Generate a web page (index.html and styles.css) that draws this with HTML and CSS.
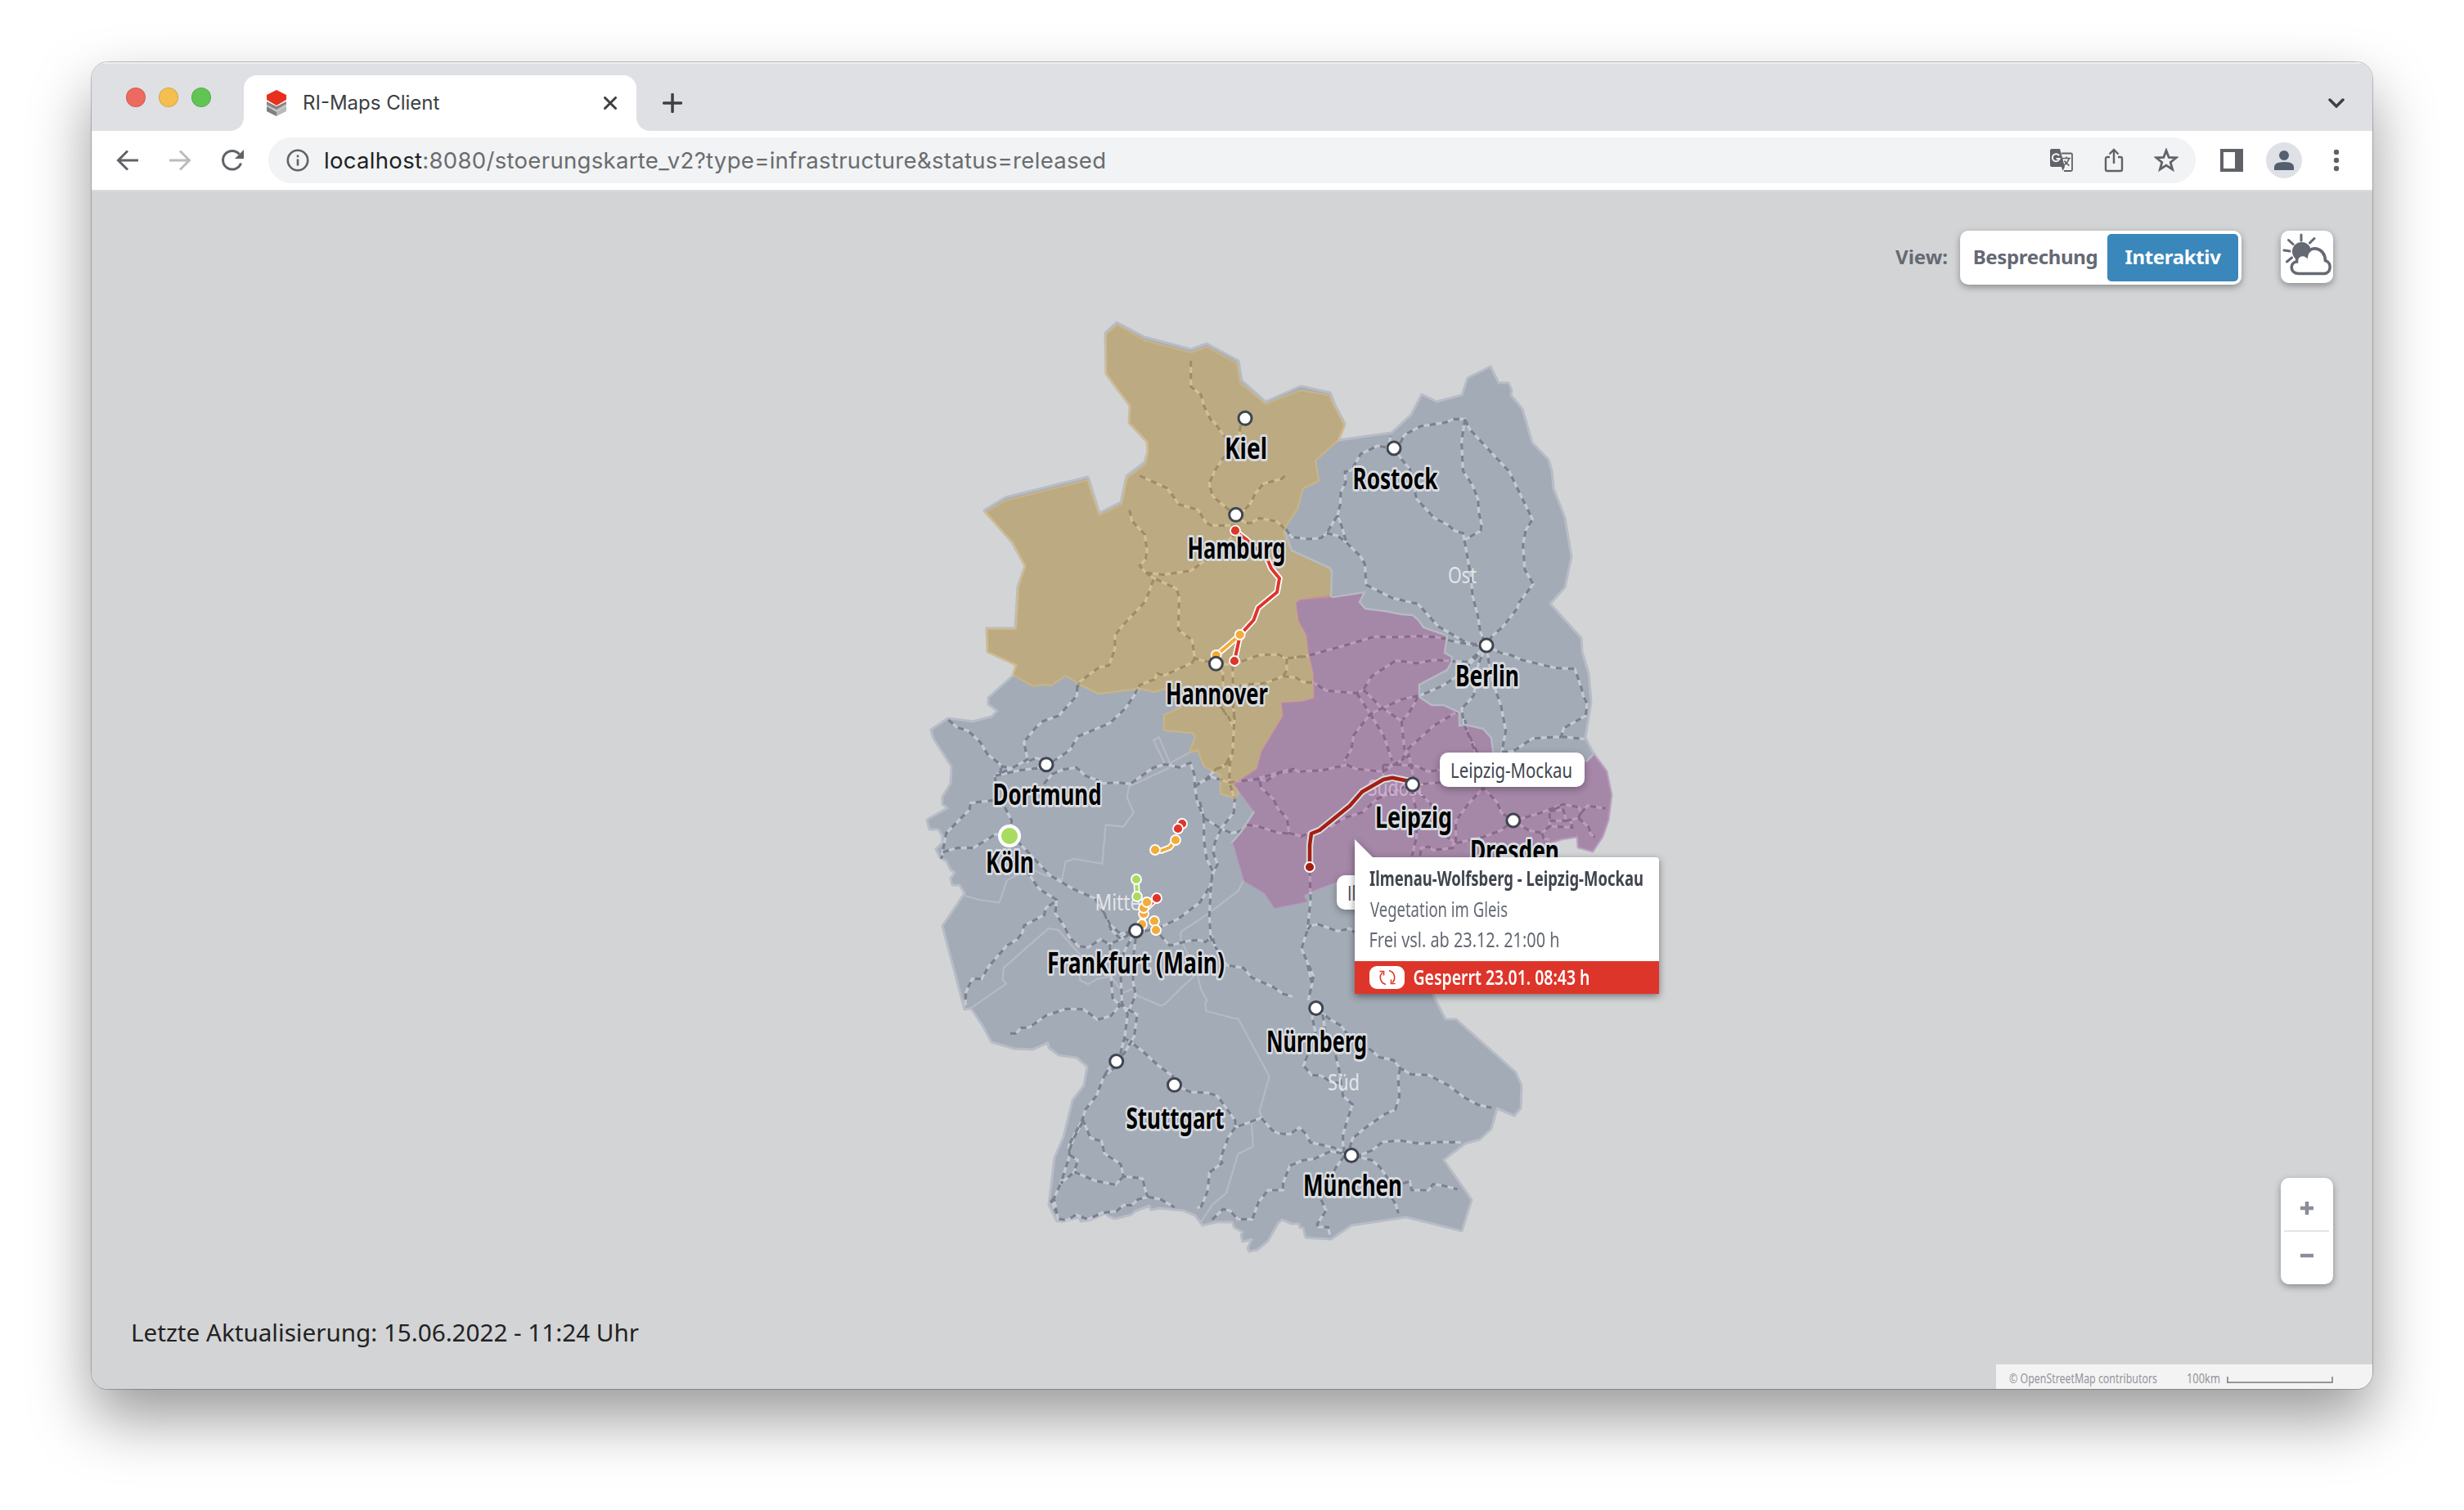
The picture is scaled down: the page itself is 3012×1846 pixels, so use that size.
FILE: index.html
```html
<!DOCTYPE html>
<html lang="de">
<head>
<meta charset="utf-8">
<title>RI-Maps Client</title>
<link rel="stylesheet" href="styles.css">
</head>
<body>
<div class="window">
  <header class="tabstrip">
    <div class="lights"><i class="light red"></i><i class="light yellow"></i><i class="light green"></i></div>
    <div class="tab">
      <svg class="favicon" width="24" height="32" viewBox="0 0 24 32">
        <path fill="#b9b9b9" d="M0 20 12 26 24 20V26L12 32 0 26Z"/>
        <path fill="#808080" d="M0 20 12 27V32L0 26Z"/>
        <path fill="#c4c4c4" d="M0 15 12 21 24 15V20L12 26 0 20Z"/>
        <path fill="#858585" d="M0 14 12 20 24 14V17L12 24 0 18Z"/>
        <path fill="#e8301f" d="M12 0 24 6V12L12 19 0 12V6Z"/>
      </svg>
      <span class="tab-title">RI-Maps Client</span>
      <svg class="close" width="16" height="16" viewBox="0 0 16 16"><path d="M1.5 1.5 14.5 14.5M14.5 1.5 1.5 14.5"/></svg>
    </div>
    <svg class="plus" width="24" height="24" viewBox="0 0 24 24"><path d="M12 1.5V22.500M1.5 12H22.500"/></svg>
    <svg class="chevron" width="20" height="12" viewBox="0 0 20 12"><path d="M2 2 10 10 18 2"/></svg>
  </header>

  <div class="toolbar">
    <svg class="nav" width="28" height="28" viewBox="0 0 28 28"><path d="M27 14H3M14 2.500 2.500 14 14 25.500"/></svg>
    <svg class="nav off" width="28" height="28" viewBox="0 0 28 28"><path d="M1 14H25M14 2.500 25.500 14 14 25.500"/></svg>
    <svg class="nav" width="28" height="28" viewBox="0 0 28 28"><path d="M24.500 17.500A11.300 11.300 0 1 1 22.500 6.500"/><path class="solid" d="M28 1V12H17Z"/></svg>
    <div class="omnibox">
      <svg class="info" width="28" height="28" viewBox="0 0 28 28"><circle cx="14" cy="14" r="12.200"/><path d="M14 12.500V20.500M14 7.500V10.200"/></svg>
      <span class="url"><b>localhost</b>:8080/stoerungskarte_v2?type=infrastructure&amp;status=released</span>
      <svg class="ico" width="28" height="28" viewBox="0 0 28 28">
        <path d="M14 5.500H25.500Q27 5.500 27 7V25.500Q27 27 25.500 27H17" fill="none" stroke="#5f6368" stroke-width="1.800"/>
        <path d="M15 11.500H25M20 9.500V11.500M23 12Q21.500 17.500 16 20.500M17.500 14.500Q19.500 18 23.500 20.500" fill="none" stroke="#5f6368" stroke-width="1.600"/>
        <path d="M2 0H12L18 22 15.500 27 14 22H2Q0 22 0 20V2Q0 0 2 0Z" fill="#5f6368"/>
        <path d="M11.200 8.300A4.500 4.500 0 1 0 11.700 12H7.500" fill="none" stroke="#f1f3f4" stroke-width="2"/>
      </svg>
      <svg class="ico share" width="24" height="30" viewBox="0 0 24 30"><path d="M7 11H4Q2 11 2 13V26Q2 28 4 28H20Q22 28 22 26V13Q22 11 20 11H17M12 19V3M6.500 7.500 12 2 17.500 7.500" fill="none" stroke="#5f6368" stroke-width="2.400"/></svg>
      <svg class="ico star" width="30" height="30" viewBox="0 0 30 30"><path d="M15 3 18.200 11.400 27.200 11.800 20.200 17.400 22.600 26 15 21.100 7.400 26 9.800 17.400 2.800 11.800 11.800 11.400Z" fill="none" stroke="#5f6368" stroke-width="2.800"/></svg>
    </div>
    <svg class="panel" width="28" height="28" viewBox="0 0 28 28"><path fill="#5f6368" fill-rule="evenodd" d="M0 0H28V28H0ZM4 4V24H18V4Z"/></svg>
    <svg class="avatar" width="44" height="44" viewBox="0 0 44 44"><circle cx="22" cy="22" r="22" fill="#dee1e6"/><circle cx="22" cy="16" r="6" fill="#565f70"/><path d="M10 34V30Q10 24 22 24T34 30V34Z" fill="#565f70"/></svg>
    <svg class="dots" width="8" height="28" viewBox="0 0 8 28"><circle cx="4" cy="4" r="3.200"/><circle cx="4" cy="14" r="3.200"/><circle cx="4" cy="24" r="3.200"/></svg>
  </div>

  <main class="stage">
    <svg class="map" viewBox="112 232 2788 1466">
      <defs>
        <g id="rails">
          <g transform="translate(1120 380) scale(.357143 .333333)">
            <path d="M940 183 940 278 975 308 985 350 1008 400 1020 408 1060 468 1095 500M1110 420 1100 500 1050 540 1020 590 1003 635 1015 680 1070 730 1092 750M765 605 858 650 900 710 965 730 990 775 1010 787 1092 787M1262 605 1250 617 1190 633 1160 670 1145 705 1120 735 1094 748M1094 755 1130 778 1145 778 1175 760 1235 773 1262 800M730 730 738 770 782 820 790 880 785 910 765 935 785 960 845 968 940 953 990 915 1085 825 1092 790M785 960 812 980 890 1018 900 1050 897 1170 945 1208 953 1275 1020 1293M812 985 785 1065 710 1150 680 1190 680 1240 660 1300 625 1308 560 1360 550 1385M953 1275 945 1290 850 1337 825 1330 815 1352 765 1372 755 1400M1030 1298 1090 1295 1175 1262 1240 1260 1262 1275 1330 1268 1365 1258M1268 1275 1268 1320 1255 1340 1195 1365 1120 1372 1050 1400M1255 1340 1300 1345 1325 1362 1358 1362M1030 1298 1050 1330 1050 1375 1040 1450 1075 1500M1083 1300 1085 1450 1090 1500"/>
          </g>
          <g transform="translate(1540 430) scale(.333333)">
            <path d="M95 650 117 680 180 687 225 683 245 665 285 600 295 560 297 515 315 480 312 440 335 435 370 375 432 345 470 352M490 352 475 335 480 310M245 665 285 675 318 700 300 640 285 600M318 700 370 752 385 778 390 855 485 903 580 925 655 1008 760 1068 830 1078M690 1058 740 1068 800 1078M515 335 530 305 590 273 680 260 710 247 752 247 770 285 915 440 1000 615 975 655 965 710 972 800 1003 852 950 920 945 940 890 1010 850 1045 830 1078M752 247 740 330 745 437 780 490 800 540 803 590 813 630 810 657 750 690M495 355 520 395 550 430 575 540 640 610 690 635 715 657 745 665 750 690 775 830 780 895 800 970 808 1025 830 1078M830 1078 885 1105 920 1112 960 1130 1085 1160 1155 1163 1180 1235 1185 1260 1200 1290 1195 1335 1115 1380 1105 1412 1000 1418 930 1465 885 1468M1105 1412 1190 1420M830 1078 850 1200 885 1300 902 1390 885 1480M830 1078 800 1150 785 1260 740 1310 750 1370 800 1475M830 1078 765 1137 705 1135 640 1130 575 1143 500 1132 410 1190 380 1240 355 1252 245 1243 195 1213 160 1213M830 1078 740 1180 670 1225 590 1260 520 1275 405 1328 345 1405 335 1460 310 1500M135 1120 175 1115 320 1075 420 1045 500 1047 580 1043 650 1047 690 1055M355 1252 405 1328 455 1410 485 1500M380 1240 440 1300 520 1355 530 1460M520 1500 545 1455 640 1370 725 1320M580 1265 550 1320 525 1350"/>
          </g>
          <g transform="translate(1120 820) scale(.333333)">
            <path d="M118 180 150 208 190 220 235 262 260 305 310 345 310 370 290 385 290 410M590 55 590 90 522 165 465 185 435 212 395 262 408 325 350 358 310 375M812 65 800 90 765 140 710 192 595 240 575 270 565 290 505 330 478 345M478 330 440 320 405 335M310 350 350 358M290 385 380 365 440 358 478 345M468 415 500 378 540 362 588 355 620 385 660 400 685 413 740 410 785 415 870 355 915 343 965 355 1005 337 1020 380 1022 425 1030 480 1055 540 1055 620 1065 690 1090 740 1078 790 1040 850 960 910 900 938 840 955 805 953M1022 425 1065 395 1100 360 1150 335M1022 425 1040 410 1085 390 1150 410M1040 480 1055 540M1165 150 1165 210 1160 300 1150 340 1148 410 1168 470 1165 520 1120 575 1095 630 1090 670 1105 710 1085 750 1080 800 1075 900 1080 980 1095 1010 1140 1080 1200 1090 1230 1125 1310 1160 1345 1185 1380 1195M1100 360 1130 350 1160 300M1115 130 1145 170 1165 210M1055 540 1120 580 1155 595 1185 590 1215 565 1250 570 1330 595 1380 597M1148 410 1245 398 1285 403 1330 375 1380 368M1260 405 1265 430 1310 470 1325 505 1360 540 1367 595M285 475 200 485 195 510 150 555 110 595 98 660 92 690M98 665 150 650 210 650 290 600 340 600M325 500 350 550 345 600M370 625 400 655 490 750 575 800 655 835 690 890 710 930 750 965 805 953M690 890 715 950 745 980 805 953M405 735 450 800 515 840 510 890 545 940 560 975 595 1010 630 1015 675 985 710 1003 760 980 805 953M505 850 475 870 470 895 395 935 390 960 370 985 330 1010 300 1045 265 1085 240 1130 205 1130 182 1180 180 1228M805 953 760 1035 750 1120 755 1220 775 1260 765 1340 750 1400 734 1432M805 980 795 1060 795 1140 805 1190 780 1245M710 1003 715 1130 720 1200 745 1225 810 1260 800 1340 765 1400 734 1432M345 1330 365 1330 385 1310 415 1308 475 1265 550 1240 615 1242 665 1280 715 1265 745 1230M760 1345 795 1368 830 1395 890 1450 945 1490M870 930 895 970 930 1008 1000 990 1040 988 1060 995 1085 975 1100 1020"/>
          </g>
          <g transform="translate(1480 860) scale(.369898 .333333)">
            <path d="M370 245 450 225 480 240 570 250 640 200M140 280 235 250 275 240 290 250 370 245M645 200 655 190 670 270M570 225 570 270 590 290M570 225 625 225 680 230 720 250 780 240M258 475 300 487 335 470 400 450 440 420 500 400 550 350 650 300M700 295 760 290 840 280M665 300 720 360 750 400 780 490 810 510M665 320 680 400 680 490 665 560M692 560 695 530 720 525 735 538 800 530 800 515 900 490 960 465 1000 430M810 510 810 430 850 370 900 310 945 360 960 400 1000 430M1000 430 1080 405 1165 370 1215 380 1225 400 1245 375 1305 385M1000 430 1050 465 1095 475 1120 450 1120 400 1165 370M1120 395 1165 390 1175 430 1215 420 1225 395M1120 430 1190 430 1195 455 1120 450M1215 420 1250 455 1255 480 1270 490M1095 475 1100 495 1120 500M327 610 330 720 320 830 300 900 340 1000 322 1090M320 960 335 1030 322 1090M320 830 330 815 355 810 420 835 460 825 475 840M840 60 850 110 875 180"/>
          </g>
          <g transform="translate(1200 1160) scale(.333333)">
            <path d="M494 430 450 465 420 540 380 590 370 625 320 720 322 760 290 860 265 915 280 990 315 995 345 975 390 992 440 968 495 962 520 940 550 940 575 918 610 910 655 918 708 948M494 412 465 440 450 465M370 625 400 695 440 705 450 750 510 790 520 835 590 842 600 885 610 910M322 755 352 775 340 818 290 860M340 818 415 850 490 865 520 835M370 635 335 700 322 740M265 915 255 925 275 970M707 498 765 525 830 528 865 540 930 630 930 655 1025 620 1065 665 1090 677 1130 680 1165 655 1190 680 1205 710 1290 728 1355 757M930 655 905 690 875 770 882 785 835 820 828 890 805 945 790 950M845 993 885 955 910 960 940 992 992 992 1015 930 1050 885 1105 885 1105 860 1130 795 1180 775 1220 770 1280 742 1355 757"/>
          </g>
          <g transform="translate(1560 1200) scale(.333333)">
            <path d="M146 98 132 130 145 190M170 120 182 190M146 98 200 140 235 160 260 190M340 245 380 278 430 288 455 318 495 340 560 343 630 380 690 425 740 452 790 463M455 318 447 350 452 420 437 470 400 485 325 538 280 575 270 610M115 270 100 308 130 343 165 345 200 368 240 373M218 270 232 330 245 420 280 450 260 510 245 560 245 595 250 620M290 640 310 635 350 620 390 588 455 583 530 595 600 588 680 590M290 640 350 655 380 680 415 730M465 740 490 733 497 765 560 765 575 743 620 750 665 762M425 795 440 820 448 850M250 640 220 680 210 700M165 800 183 840 150 890 155 900 190 900 197 930"/>
          </g>
        </g>
      </defs>

      <!-- country outline -->
      <path class="country" d="M1351 407 1365 394 1399 412 1456 427 1475 420 1514 441 1518 465 1547 491 1590 472 1626 480 1633 497 1644 518 1636.500 538 1701 529 1725 507 1738 482 1756 491 1787 483 1794 462 1822 448 1832 468 1844 468 1848 477 1847 483 1861 500 1873 541 1893 562 1897 576 1899 597 1913 633 1921 681 1913 718 1895 738 1933 780 1934 797 1942 823 1945 858 1938 902 1948 921 1964 943 1970 972 1966 1003 1959 1023 1947 1041 1929 1036 1928 1023 1909 1026 1892 1032 1870 1045 1750 1100 1740 1190 1750 1213 1767 1246 1780 1246 1853 1311 1860 1327 1859 1355 1851 1364 1830 1355 1823 1380 1809 1393 1791 1398 1765 1418 1799 1467 1787 1505 1719 1488 1652 1498 1627 1515 1596 1513 1593 1501 1589 1501 1588 1496 1579 1496 1567 1491 1562 1496 1550 1517 1537 1528 1527 1530 1525 1526 1530 1515 1519 1518 1517 1510 1519 1506 1509 1501 1506 1494 1487 1494 1470 1498 1461 1486 1447 1480 1418 1477 1407 1479 1405 1474 1387 1481 1383 1485 1363 1490 1355 1487 1352 1483 1331 1492 1321 1493 1319 1488 1300 1493 1292 1493 1282 1473 1289 1415 1300 1390 1311 1345 1325 1327 1329 1304 1316 1293 1294 1290 1282 1281 1281 1275 1262 1283 1240 1282 1212 1274 1200 1252 1187 1233 1179 1234 1152 1132 1179 1092 1173 1082 1164 1082 1162 1074 1167 1067 1162 1063 1157 1053 1149 1048 1144 1038 1152 1030 1152 1022 1147 1014 1136 1014 1133 1002 1158 988 1152 983 1152 974 1162 958 1163 937 1141 903 1138 892 1159 878 1189 882 1212 876 1219 869 1208 861 1208 853 1238 826 1242 813 1207 797 1206 768 1241 768 1244 717 1253 692 1237 663 1203 624 1229 608 1330 583 1344 627 1370 614 1377 582 1399 565 1403 552 1402 540 1380 517 1381 496 1352 457Z"/>

      <!-- state borders -->
      <g class="border" transform="translate(1120 820) scale(.333333)">
        <path d="M178 825 230 840 305 850 332 770 375 745 430 730 470 750 535 765 548 700 580 690 682 708 695 565 760 572 797 520 773 465 780 425 930 355M930 340 1002 300M912 340 870 255 890 243 935 350M200 1238 330 1148 317 1135 320 1090 485 945 520 950 600 1040 600 1135 630 1150 665 1130 715 1120 735 1150 760 1180 800 1165M808 1190 895 1228 910 1225 975 1160 1030 1110 970 985 970 958 1065 895 1180 808 1200 770M1030 1110 1045 1170 1067 1210 1060 1215 1063 1248 1165 1275 1180 1275 1295 1488 1258 1618 1268 1635 1230 1660 1235 1745 1180 1772 1137 1915 1085 1960 1045 2020"/>
      </g>

      <use href="#rails" class="rail-bed"/>
      <use href="#rails" class="rail-ties"/>

      <!-- regions -->
      <path class="region nord" d="M1352 409 1366 397 1399 416 1456 431 1475 424 1512 444 1516 468 1547 494 1590 477 1624 483 1633 500 1644 521 1636 538 1608 563 1612 588 1593 597 1586 622 1571 645 1569 653 1579 673 1625 694 1628 698 1627 730 1589 733 1584 737 1587 759 1597 777 1599 798 1605 822 1606 853 1593 857 1566 859 1568 875 1542 918 1536 940 1508 958 1514 970 1509 976 1492 970 1492 948 1472 937 1464 917 1454 920 1461 901 1458 896 1423 893 1423 874 1443 865 1424 842 1411 846 1393 842 1343 848 1320 837 1303 826 1285 838 1274 837 1263 839 1238 825 1242 813 1207 797 1206 769 1242 769 1245 717 1253 692 1238 663 1204 627 1229 612 1329 587 1344 630 1371 617 1378 584 1400 568 1403 552 1402 540 1380 517 1381 496 1352 457Z"/>
      <path class="region suedost" d="M1589 733 1668 724 1662 736 1669 744 1693 747 1713 751 1727 752 1734 758 1740 767 1769 777 1766 798 1775 803 1774 810 1769 819 1735 837 1735 852 1750 862 1765 862 1784 871 1784 887 1792 886 1813 891 1823 902 1826 925 1840 945 1900 945 1939 931 1948 922 1964 943 1970 972 1966 1003 1959 1023 1947 1041 1929 1036 1928 1023 1909 1026 1892 1032 1870 1045 1700 1070 1634 1078 1602 1090 1593 1095 1598 1102 1558 1110 1546 1092 1521 1077 1508 1032 1505 1031 1517 1017 1533 992 1508 958 1536 940 1542 918 1568 875 1566 859 1593 857 1606 853 1605 822 1599 798 1597 777 1587 759 1584 737Z"/>
      <path class="seam" d="M1628 730 1668 724 1662 736 1669 744 1693 747 1713 751 1727 752 1734 758 1740 767 1769 777 1766 798 1775 803 1774 810 1769 819 1735 837 1735 852 1750 862 1765 862 1784 871 1784 887 1792 886 1813 891 1823 902 1826 925M1505 1031 1517 1017 1533 992M1571 650 1579 673 1625 694 1628 698 1627 730M1939 931 1948 922"/>

      <g class="region-name">
        <text x="1770" y="713" textLength="35" lengthAdjust="spacingAndGlyphs">Ost</text>
        <text x="1338.500" y="1112.500" textLength="56" lengthAdjust="spacingAndGlyphs">Mitte</text>
        <text x="1623" y="1332.500" textLength="39" lengthAdjust="spacingAndGlyphs">Süd</text>
        <text class="on-purple" x="1672" y="973.300" textLength="68" lengthAdjust="spacingAndGlyphs">Südost</text>
      </g>

      <!-- disruptions -->
      <path class="casing" d="M1510 649 1523 659 1549 683 1554 695 1564 707 1561 724 1538 743 1532.500 758 1516 776 1509 808M1516 776 1487 801M1412 1039 1420 1040 1430 1036 1437 1027M1389 1075 1390 1096M1414 1098 1402 1110M1402 1103 1398 1110 1398 1117 1396 1130 1388 1138M1411 1126 1413 1137M1445 1007 1440 1013"/>
      <g class="trace">
        <path stroke="#de352a" d="M1510 649 1523 659 1549 683 1554 695 1564 707 1561 724 1538 743 1532.500 758 1516 776 1509 808M1414 1098 1402 1110M1445 1007 1440 1013"/>
        <path stroke="#f3ac3a" d="M1516 776 1487 801M1412 1039 1420 1040 1430 1036 1437 1027M1402 1103 1398 1110 1398 1117 1396 1130M1411 1126 1413 1137"/>
        <path stroke="#a8dc60" d="M1389 1075 1390 1096"/>
      </g>
      <path class="selected-casing" d="M1601 1060 1601 1033 1603 1019 1613 1015 1650 985 1665 968 1691 953 1702 950.700 1727 956"/>
      <path class="selected" d="M1601 1060 1601 1033 1603 1019 1613 1015 1650 985 1665 968 1691 953 1702 950.700 1727 956"/>
      <g class="stop">
        <circle cx="1510" cy="648.700" r="6" fill="#de352a"/><circle cx="1509" cy="808" r="6" fill="#de352a"/>
        <circle cx="1515.700" cy="776" r="6" fill="#f3ac3a"/><circle cx="1486.700" cy="801" r="6" fill="#f3ac3a"/>
        <circle cx="1445" cy="1007" r="6" fill="#de352a"/><circle cx="1440" cy="1013" r="6" fill="#de352a"/>
        <circle cx="1437" cy="1027" r="6" fill="#f3ac3a"/><circle cx="1412" cy="1039" r="6" fill="#f3ac3a"/>
        <circle cx="1389" cy="1075" r="6" fill="#a8dc60"/><circle cx="1390" cy="1096" r="6" fill="#a8dc60"/>
        <circle cx="1414" cy="1098" r="6" fill="#de352a"/>
        <circle cx="1396" cy="1130" r="6" fill="#f3ac3a"/><circle cx="1398" cy="1117" r="6" fill="#f3ac3a"/><circle cx="1398" cy="1110" r="6" fill="#f3ac3a"/><circle cx="1402" cy="1103" r="6" fill="#f3ac3a"/>
        <circle cx="1411" cy="1126" r="6" fill="#f3ac3a"/><circle cx="1413" cy="1137" r="6" fill="#f3ac3a"/>
        <circle cx="1601" cy="1060" r="6" fill="#a31f14"/>
        <circle cx="1234" cy="1022" r="12" fill="#a8dc60" stroke-width="4"/>
      </g>

      <g class="city">
        <circle cx="1522" cy="511.300" r="8"/><circle cx="1510.700" cy="629.300" r="8"/><circle cx="1486.400" cy="811.300" r="8"/>
        <circle cx="1704" cy="548" r="8"/><circle cx="1817" cy="789" r="8"/><circle cx="1279" cy="934.700" r="8"/>
        <circle cx="1388.600" cy="1137.700" r="8"/><circle cx="1726.700" cy="959" r="8"/><circle cx="1849.800" cy="1003" r="8"/>
        <circle cx="1608.700" cy="1232.500" r="8"/><circle cx="1364.700" cy="1297.500" r="8"/><circle cx="1435.500" cy="1326.300" r="8"/><circle cx="1652" cy="1412.500" r="8"/>
      </g>
      <g class="city-name">
        <text x="1497" y="561" textLength="52" lengthAdjust="spacingAndGlyphs">Kiel</text>
        <text x="1451.500" y="682.700" textLength="120" lengthAdjust="spacingAndGlyphs">Hamburg</text>
        <text x="1425" y="860.600" textLength="125" lengthAdjust="spacingAndGlyphs">Hannover</text>
        <text x="1653.500" y="597.700" textLength="104" lengthAdjust="spacingAndGlyphs">Rostock</text>
        <text x="1779" y="839.300" textLength="78" lengthAdjust="spacingAndGlyphs">Berlin</text>
        <text x="1213.500" y="984.300" textLength="133" lengthAdjust="spacingAndGlyphs">Dortmund</text>
        <text x="1205" y="1066.500" textLength="59" lengthAdjust="spacingAndGlyphs">Köln</text>
        <text x="1280" y="1190" textLength="217" lengthAdjust="spacingAndGlyphs">Frankfurt (Main)</text>
        <text x="1681" y="1012.300" textLength="94" lengthAdjust="spacingAndGlyphs">Leipzig</text>
        <text x="1797" y="1052.700" textLength="109" lengthAdjust="spacingAndGlyphs">Dresden</text>
        <text x="1548" y="1286" textLength="123" lengthAdjust="spacingAndGlyphs">Nürnberg</text>
        <text x="1376.500" y="1379.500" textLength="120" lengthAdjust="spacingAndGlyphs">Stuttgart</text>
        <text x="1593" y="1462" textLength="121" lengthAdjust="spacingAndGlyphs">München</text>
      </g>
    </svg>

    <div class="stop-tag start"><svg width="152" height="42"><text x="0" y="31" textLength="149" lengthAdjust="spacingAndGlyphs">Leipzig-Mockau</text></svg></div>
    <div class="stop-tag end"><svg width="178" height="42"><text x="0" y="31" textLength="174" lengthAdjust="spacingAndGlyphs">Ilmenau-Wolfsberg</text></svg></div>

    <section class="popup">
      <div class="popup-body">
        <svg class="line" width="340" height="37"><text class="strong" x="-1" y="19" textLength="335" lengthAdjust="spacingAndGlyphs">Ilmenau-Wolfsberg - Leipzig-Mockau</text></svg>
        <svg class="line" width="340" height="37"><text x="0" y="20" textLength="168" lengthAdjust="spacingAndGlyphs">Vegetation im Gleis</text></svg>
        <svg class="line" width="340" height="37"><text x="-1.500" y="20" textLength="233" lengthAdjust="spacingAndGlyphs">Frei vsl. ab 23.12. 21:00 h</text></svg>
      </div>
      <div class="popup-status">
        <span class="badge"><svg width="22" height="22" viewBox="0 0 22 22"><path d="M9 19.500A8.700 8.700 0 0 1 5 4.800M13 2.500A8.700 8.700 0 0 1 17 17.200"/><path d="M1.500 3.500H6.500V8.500M20.500 18.500H15.500V13.500"/></svg></span>
        <svg class="line" width="300" height="40"><text x="-.5" y="28.500" textLength="216" lengthAdjust="spacingAndGlyphs">Gesperrt 23.01. 08:43 h</text></svg>
      </div>
    </section>

    <div class="controls">
      <span class="view-label">View:</span>
      <div class="switch"><span class="option">Besprechung</span><span class="option active">Interaktiv</span></div>
      <div class="weather">
        <svg width="64" height="64" viewBox="0 0 64 64">
          <g stroke="#646973" stroke-width="3" stroke-linecap="round"><path d="M25 5V12M9.500 11.500 15 16.500M41 9.500 35.500 15M4 24 11 25M7.500 38 13.500 33"/></g>
          <circle cx="25.500" cy="25.500" r="11.500" fill="#646973"/>
          <path d="M22 52.500C11 52.500 10.500 38.500 19.500 38C19 30 27 27.500 31.500 31C34 17 54 19.500 54.500 36.500C63 39 61.500 52.500 53 52.500Z" fill="#fff" stroke="#646973" stroke-width="3.600"/>
        </svg>
      </div>
    </div>

    <div class="zoom">
      <svg width="64" height="64" viewBox="0 0 64 64"><path d="M24 37H40M32 29V45"/></svg>
      <i></i>
      <svg width="64" height="64" viewBox="0 0 64 64"><path d="M24 29H40"/></svg>
    </div>
    <p class="updated"><svg width="640" height="50"><text x="0" y="34" textLength="621" lengthAdjust="spacingAndGlyphs">Letzte Aktualisierung: 15.06.2022 - 11:24 Uhr</text></svg></p>
    <footer class="attribution">
      <svg width="412" height="30"><text x="0" y="23" textLength="181" lengthAdjust="spacingAndGlyphs">© OpenStreetMap contributors</text><text x="217" y="23" textLength="41" lengthAdjust="spacingAndGlyphs">100km</text><path d="M267 15V22H395V15"/></svg>
    </footer>
  </main>
</div>
</body>
</html>
```
FILE: styles.css
```css
* { box-sizing: border-box; }
body {
  margin: 0;
  height: 1846px;
  overflow: hidden;
  background: #fff;
  padding: 76px 112px 0;
  font-family: "Noto Sans", sans-serif;
}
svg { display: block; flex: none; }
.window {
  width: 2788px;
  height: 1622px;
  display: flex;
  flex-direction: column;
  border-radius: 20px;
  overflow: hidden;
  box-shadow: 0 0 0 1px rgba(0, 0, 0, .22), 0 36px 76px rgba(0, 0, 0, .4);
}

/* tab strip */
.tabstrip {
  height: 84px;
  display: flex;
  align-items: flex-start;
  background: #dee0e4;
  box-shadow: inset 0 2px 0 #eceef0;
}
.lights { display: flex; gap: 16px; padding: 31px 0 0 42px; width: 186px; }
.light { width: 24px; height: 24px; border-radius: 50%; border: 1px solid rgba(0, 0, 0, .12); }
.light.red { background: #ed6a5e; }
.light.yellow { background: #f5bf4f; }
.light.green { background: #61c554; }
.tab {
  position: relative;
  display: flex;
  align-items: center;
  width: 480px;
  height: 68px;
  margin-top: 16px;
  padding: 0 24px 0 28px;
  background: #fff;
  border-radius: 16px 16px 0 0;
}
.tab::before, .tab::after {
  content: "";
  position: absolute;
  bottom: 0;
  width: 16px;
  height: 16px;
}
.tab::before { left: -16px; background: radial-gradient(circle at 0 0, transparent 15.500px, #fff 16px); }
.tab::after { right: -16px; background: radial-gradient(circle at 100% 0, transparent 15.500px, #fff 16px); }
.tab-title { flex: 1; margin: -1px 0 0 20px; font: 24px Inter, sans-serif; color: #3c4043; }
.close, .plus, .chevron { fill: none; stroke: #3c4043; stroke-width: 3; stroke-linecap: round; }
.plus { margin: 38px 0 0 32px; stroke-width: 3.500; }
.chevron { margin: 44px 34px 0 auto; stroke-width: 3.500; }

/* toolbar */
.toolbar {
  height: 72px;
  display: flex;
  align-items: center;
  padding-left: 30px;
  background: #fff;
}
.nav { margin-right: 36px; fill: none; stroke: #5f6368; stroke-width: 3; }
.nav:nth-child(3) { margin-right: 30px; }
.nav.off { stroke: #babcbe; }
.nav .solid { fill: #5f6368; stroke: none; }
.omnibox {
  width: 2356px;
  height: 56px;
  display: flex;
  align-items: center;
  padding: 0 20px 0 22px;
  border-radius: 28px;
  background: #f1f3f4;
}
.info { fill: none; stroke: #5f6368; stroke-width: 2.600; }
.url { flex: 1; margin-left: 18px; font: 27.500px Inter, sans-serif; letter-spacing: .31px; color: #6a6c6f; }
.url b { font-weight: 400; color: #202124; }
.share { margin-left: 38px; }
.star { margin-left: 37px; margin-right: 1px; }
.panel { margin-left: 30px; }
.avatar { margin-left: 28px; }
.dots { margin-left: 38px; fill: #5f6368; }

/* map */
.stage { position: relative; flex: 1; background: #d3d4d6; border-top: 2px solid #dadbdd; overflow: hidden; }
.map { position: absolute; left: 0; top: -2px; width: 2788px; height: 1466px; }
.country { fill: #a3abb6; stroke: #b8bcc6; stroke-width: 3; stroke-linejoin: round; }
.border, .rail-bed, .rail-ties { fill: none; }
.border path, #rails path { vector-effect: non-scaling-stroke; }
.border { stroke: #b6bac3; stroke-width: 2.200; }
.rail-bed { stroke: #c3c9d5; stroke-width: 3.200; }
.rail-ties { stroke: #7a808c; stroke-width: 3.200; stroke-dasharray: 7.500 7.500; }
.region { stroke-width: 2.500; stroke-linejoin: round; }
.nord { fill: rgba(244, 170, 10, .3); stroke: rgba(225, 190, 120, .45); }
.suedost { fill: rgba(173, 53, 137, .3); stroke: rgba(190, 130, 190, .3); }
.seam { fill: none; stroke: #b5bac3; stroke-width: 2.500; }
.region-name { font-size: 28px; fill: #e3e5e9; }
.region-name .on-purple { fill: #cdb3d2; }
.casing, .trace, .selected-casing, .selected { fill: none; stroke-linejoin: round; stroke-linecap: round; }
.casing { stroke: #fff; stroke-width: 7.500; }
.trace { stroke-width: 4; }
.selected-casing { stroke: #dcdcdf; stroke-width: 8.500; }
.selected { stroke: #a31f14; stroke-width: 4.500; }
.stop { stroke: #fff; stroke-width: 1.800; }
.city { fill: #fff; stroke: #40454f; stroke-width: 3; }
.city-name {
  font-size: 36px;
  font-weight: 700;
  fill: #000;
  stroke: #d9dce1;
  stroke-width: 6;
  stroke-linejoin: round;
  paint-order: stroke;
}

/* map callouts */
.stop-tag {
  position: absolute;
  height: 42px;
  border-radius: 10px;
  background: #fff;
  box-shadow: 0 3px 10px rgba(0, 0, 0, .3);
  font-size: 26px;
  fill: #40454f;
}
.stop-tag.start { left: 1648px; top: 686px; width: 177px; padding-left: 13px; }
.stop-tag.end { left: 1522px; top: 836px; width: 204px; padding-left: 13px; font-family: "Open Sans", sans-serif; }
.popup {
  position: absolute;
  left: 1544px;
  top: 814px;
  width: 372px;
  height: 167px;
  border-radius: 0 4px 0 0;
  background: #fff;
  filter: drop-shadow(0 3px 5px rgba(0, 0, 0, .45));
}
.popup::before {
  content: "";
  position: absolute;
  left: 0;
  top: -22px;
  width: 23px;
  height: 23px;
  background: #fff;
  clip-path: polygon(0 0, 100% 100%, 0 100%);
}
.popup-body { height: 127px; padding: 16px 0 0 19px; font-size: 25.500px; fill: #646973; }
.popup-body .strong { font-weight: 700; fill: #40454f; }
.line { overflow: visible; }
.popup-status {
  display: flex;
  align-items: center;
  gap: 11px;
  height: 40px;
  padding-left: 18px;
  background: #de352a;
  font-size: 25.500px;
  font-weight: 600;
  fill: #fff;
}
.badge {
  display: flex;
  align-items: center;
  justify-content: center;
  width: 44px;
  height: 28px;
  border-radius: 9px;
  background: #fff;
}
.badge svg { fill: none; stroke: #de352a; stroke-width: 1.600; }

/* map controls */
.controls {
  position: absolute;
  top: 48px;
  right: 48px;
  display: flex;
  align-items: flex-start;
  font-size: 24px;
  font-weight: 700;
  color: #646973;
}
.view-label { line-height: 63px; margin-right: 15px; }
.switch {
  display: flex;
  width: 344px;
  height: 66px;
  padding: 4px;
  border-radius: 10px;
  background: #fff;
  box-shadow: 0 3px 9px rgba(0, 0, 0, .35);
}
.option { width: 176px; height: 58px; line-height: 55px; text-align: center; letter-spacing: -.35px; }
.option.active { width: 160px; border-radius: 5px; background: #3a87bb; color: #fff; }
.weather, .zoom { width: 64px; border-radius: 10px; background: #fff; box-shadow: 0 3px 9px rgba(0, 0, 0, .35); }
.weather { height: 64px; margin-left: 48px; }
.weather svg { fill: none; }
.zoom { position: absolute; right: 48px; top: 1206px; height: 130px; }
.zoom svg { stroke: #8b8d99; stroke-width: 4.500; }
.zoom i { display: block; height: 2px; margin: 0 5px 0 4px; background: #e4e4e6; }
.updated { position: absolute; left: 48px; top: 1372px; margin: 0; font-size: 28.500px; fill: #222; }
.attribution {
  position: absolute;
  right: 0;
  bottom: 0;
  width: 460px;
  height: 30px;
  padding-left: 16px;
  background: #f3f3f3;
  font-size: 17px;
  fill: #93949c;
}
.attribution path { fill: none; stroke: #93949c; stroke-width: 2; }
```
